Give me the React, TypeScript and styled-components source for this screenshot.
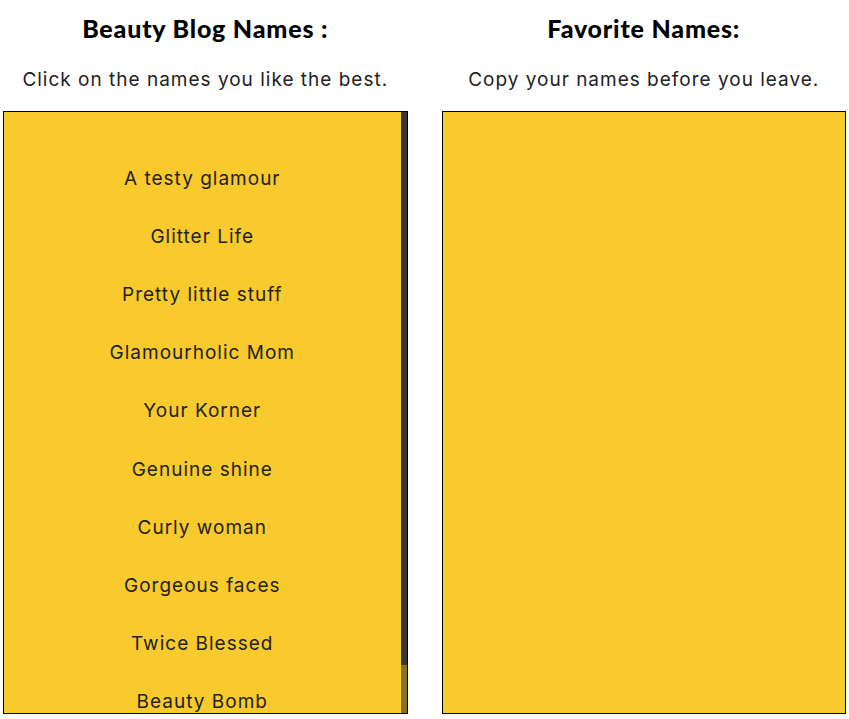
import React from 'react';
import styled, { createGlobalStyle } from 'styled-components';

const GlobalStyle = createGlobalStyle`
    html, body {
        margin: 0;
        padding: 0;
        background: #ffffff;
    }
`;

const StyledPage = styled.div`
    display: flex;
    gap: 34px;
    padding: 0 3px;
    box-sizing: border-box;
    width: 849px;
    height: 719px;
    overflow: hidden;
`;

const StyledColumn = styled.div`
    display: flex;
    flex-direction: column;
    width: 405px;
`;

const StyledHeading = styled.h2`
    margin: 14px 0 0;
    font-family: Lato, 'Liberation Sans', sans-serif;
    font-weight: 900;
    font-size: 25px;
    letter-spacing: 0.8px;
    line-height: 29px;
    color: #000;
    text-align: center;
`;

const StyledHint = styled.p`
    margin: 25px 0 0;
    font-family: Inter, 'Liberation Sans', sans-serif;
    font-size: 19px;
    letter-spacing: 1px;
    line-height: 24px;
    color: #222;
    text-align: center;
`;

const StyledPanel = styled.div`
    position: relative;
    margin-top: 19px;
    box-sizing: border-box;
    height: 603px;
    background: #f8ca2e;
    border: 1px solid #000;
    overflow: hidden;
`;

const StyledScroller = styled.div`
    height: 100%;
    overflow-y: auto;
    scrollbar-width: none;

    &::-webkit-scrollbar {
        display: none;
    }
`;

const StyledTrack = styled.div`
    position: absolute;
    top: 0;
    right: 0;
    bottom: 0;
    width: 6px;
    background: #8a6f28;
`;

const StyledThumb = styled.div`
    width: 100%;
    background: #383838;
`;

const StyledList = styled.ul`
    list-style: none;
    margin: 0;
    padding: 37px 6px 37px 0;
`;

const StyledName = styled.li`
    height: 58.2px;
    display: flex;
    align-items: center;
    justify-content: center;
    font-family: Inter, 'Liberation Sans', sans-serif;
    font-size: 19px;
    letter-spacing: 1px;
    color: #222;
    cursor: pointer;
`;

const names = [
    'A testy glamour',
    'Glitter Life',
    'Pretty little stuff',
    'Glamourholic Mom',
    'Your Korner',
    'Genuine shine',
    'Curly woman',
    'Gorgeous faces',
    'Twice Blessed',
    'Beauty Bomb',
];

export default function App() {
    const [favorites, setFavorites] = React.useState<string[]>([]);

    const pick = (name: string) => {
        setFavorites((prev) => (prev.includes(name) ? prev : [...prev, name]));
    };

    return (
        <>
            <GlobalStyle />
            <StyledPage>
                <StyledColumn>
                    <StyledHeading>Beauty Blog Names :</StyledHeading>
                    <StyledHint>Click on the names you like the best.</StyledHint>
                    <StyledPanel>
                        <StyledScroller>
                            <StyledList>
                                {names.map((name) => (
                                    <StyledName key={name} onClick={() => pick(name)}>
                                        {name}
                                    </StyledName>
                                ))}
                            </StyledList>
                        </StyledScroller>
                        <StyledTrack>
                            <StyledThumb style={{ height: '92%' }} />
                        </StyledTrack>
                    </StyledPanel>
                </StyledColumn>
                <StyledColumn>
                    <StyledHeading>Favorite Names:</StyledHeading>
                    <StyledHint>Copy your names before you leave.</StyledHint>
                    <StyledPanel>
                        {favorites.length > 0 && (
                            <StyledList>
                                {favorites.map((name) => (
                                    <StyledName key={name}>{name}</StyledName>
                                ))}
                            </StyledList>
                        )}
                    </StyledPanel>
                </StyledColumn>
            </StyledPage>
        </>
    );
}
